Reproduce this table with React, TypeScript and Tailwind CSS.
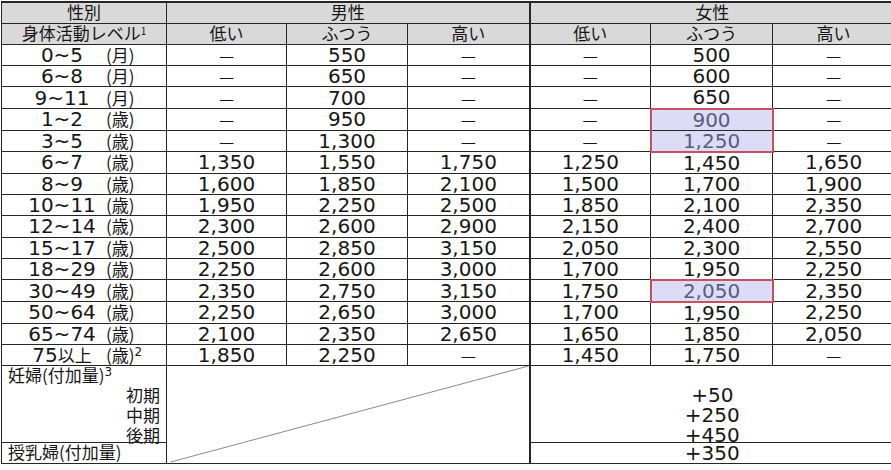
import React from "react";

const J = "font-['Noto_Sans_CJK_JP',sans-serif] text-[17px]";
const B = "border border-[#262626] p-0 text-center align-middle";

const data: [string, string, string[]][] = [
  ["0~5", "月", ["—", "550", "—", "—", "500", "—"]],
  ["6~8", "月", ["—", "650", "—", "—", "600", "—"]],
  ["9~11", "月", ["—", "700", "—", "—", "650", "—"]],
  ["1~2", "歳", ["—", "950", "—", "—", "900", "—"]],
  ["3~5", "歳", ["—", "1,300", "—", "—", "1,250", "—"]],
  ["6~7", "歳", ["1,350", "1,550", "1,750", "1,250", "1,450", "1,650"]],
  ["8~9", "歳", ["1,600", "1,850", "2,100", "1,500", "1,700", "1,900"]],
  ["10~11", "歳", ["1,950", "2,250", "2,500", "1,850", "2,100", "2,350"]],
  ["12~14", "歳", ["2,300", "2,600", "2,900", "2,150", "2,400", "2,700"]],
  ["15~17", "歳", ["2,500", "2,850", "3,150", "2,050", "2,300", "2,550"]],
  ["18~29", "歳", ["2,250", "2,600", "3,000", "1,700", "1,950", "2,250"]],
  ["30~49", "歳", ["2,350", "2,750", "3,150", "1,750", "2,050", "2,350"]],
  ["50~64", "歳", ["2,250", "2,650", "3,000", "1,700", "1,950", "2,250"]],
  ["65~74", "歳", ["2,100", "2,350", "2,650", "1,650", "1,850", "2,050"]],
  ["75以上", "歳", ["1,850", "2,250", "—", "1,450", "1,750", "—"]],
];

function hlClass(r: number, c: number): string {
  if (c !== 4) return "";
  if (r === 3)
    return "bg-[#dcdcf6] text-[#5b5b80] border-t-2 border-l-2 border-r-2 border-t-[#c94f5c] border-l-[#c94f5c] border-r-[#c94f5c]";
  if (r === 4)
    return "bg-[#dcdcf6] text-[#5b5b80] border-b-2 border-l-2 border-r-2 border-b-[#c94f5c] border-l-[#c94f5c] border-r-[#c94f5c]";
  if (r === 11)
    return "bg-[#dcdcf6] text-[#5b5b80] border-2 border-[#c94f5c]";
  return "";
}

function Age({ a }: { a: string }) {
  if (a.endsWith("以上")) {
    return (
      <>
        {a.replace("以上", "")}
        <span className={J}>以上</span>
      </>
    );
  }
  return <>{a}</>;
}

export default function App() {
  return (
    <div className="w-[891px] h-[470px] overflow-hidden bg-white pt-px pl-px text-[#161616] font-['DejaVu_Sans','Noto_Sans_CJK_JP',sans-serif]">
      <table className="border-collapse table-fixed w-[893px] border-t-2 border-[#262626]">
        <colgroup>
          <col className="w-[165px]" />
          <col className="w-[120px]" />
          <col className="w-[121px]" />
          <col className="w-[122px]" />
          <col className="w-[121px]" />
          <col className="w-[122px]" />
          <col className="w-[122px]" />
        </colgroup>
        <thead>
          <tr className="h-[21px] bg-[#d9d9d9]">
            <th className={`${B} font-normal`}>
              <div className={`${J} h-[20px] leading-[18px]`}>性別</div>
            </th>
            <th colSpan={3} className={`${B} font-normal`}>
              <div className={`${J} h-[20px] leading-[18px]`}>男性</div>
            </th>
            <th colSpan={3} className={`${B} border-l-2 font-normal`}>
              <div className={`${J} h-[20px] leading-[18px]`}>女性</div>
            </th>
          </tr>
          <tr className="h-[21px] bg-[#d9d9d9]">
            <th className={`${B} font-normal`}>
              <div className={`${J} h-[20px] leading-[18px] whitespace-nowrap`}>
                身体活動レベル<sup className="text-[10px]">1</sup>
              </div>
            </th>
            {["低い", "ふつう", "高い", "低い", "ふつう", "高い"].map((h, i) => (
              <th key={i} className={`${B} font-normal ${i === 3 ? "border-l-2" : ""}`}>
                <div className={`${J} h-[20px] leading-[18px]`}>{h}</div>
              </th>
            ))}
          </tr>
        </thead>
        <tbody>
          {data.map(([age, unit, vals], r) => (
            <tr key={r} className={r === 2 || r === 8 ? "h-[22px]" : "h-[20px]"}>
              <td className={`${B} text-[20px]`}>
                <div className="flex items-center h-[20px] leading-[18px] pl-[16px] overflow-visible">
                  <span className="w-[88px] text-center whitespace-nowrap">
                    <Age a={age} />
                  </span>
                  <span className={`${J} leading-[18px] whitespace-nowrap`}>
                    ({unit})
                    {r === 14 && <sup className="text-[12px] font-['DejaVu_Sans',sans-serif]">2</sup>}
                  </span>
                </div>
              </td>
              {vals.map((v, c) => (
                <td
                  key={c}
                  className={`${B} text-[20px] ${c === 3 ? "border-l-2" : ""} ${hlClass(r, c)}`}
                >
                  <div className="h-[20px] leading-[20px]">
                    {v === "—" ? <span className={`${J} leading-[18px]`}>—</span> : v}
                  </div>
                </td>
              ))}
            </tr>
          ))}
          <tr className="h-[76px]">
            <td className={`${B} text-left align-top`}>
              <div className={`${J} h-[76px] px-[6px]`}>
                <div className="h-[20px] leading-[18px] whitespace-nowrap">
                  妊婦(付加量)<sup className="text-[12px] font-['DejaVu_Sans',sans-serif]">3</sup>
                </div>
                <div className="h-[20px] leading-[18px] text-right">初期</div>
                <div className="h-[20px] leading-[18px] text-right">中期</div>
                <div className="h-[16px] leading-[18px] text-right">後期</div>
              </div>
            </td>
            <td colSpan={3} rowSpan={2} className={`${B} relative`}>
              <svg
                className="absolute inset-0 w-full h-full"
                viewBox="0 0 100 100"
                preserveAspectRatio="none"
              >
                <line
                  x1="1"
                  y1="99"
                  x2="100"
                  y2="0"
                  stroke="#8a8a8a"
                  strokeWidth="1"
                  vectorEffect="non-scaling-stroke"
                />
              </svg>
            </td>
            <td colSpan={3} className={`${B} border-l-2 align-top text-[20px]`}>
              <div className="h-[76px]">
                <div className="h-[19px]" />
                <div className="h-[20px] leading-[20px]">+50</div>
                <div className="h-[20px] leading-[20px]">+250</div>
                <div className="h-[17px] leading-[20px]">+450</div>
              </div>
            </td>
          </tr>
          <tr className="h-[20px]">
            <td className={`${B} text-left`}>
              <div className={`${J} h-[20px] leading-[18px] px-[6px] whitespace-nowrap`}>授乳婦(付加量)</div>
            </td>
            <td colSpan={3} className={`${B} border-l-2 text-[20px]`}>
              <div className="h-[20px] leading-[20px]">+350</div>
            </td>
          </tr>
        </tbody>
      </table>
    </div>
  );
}
